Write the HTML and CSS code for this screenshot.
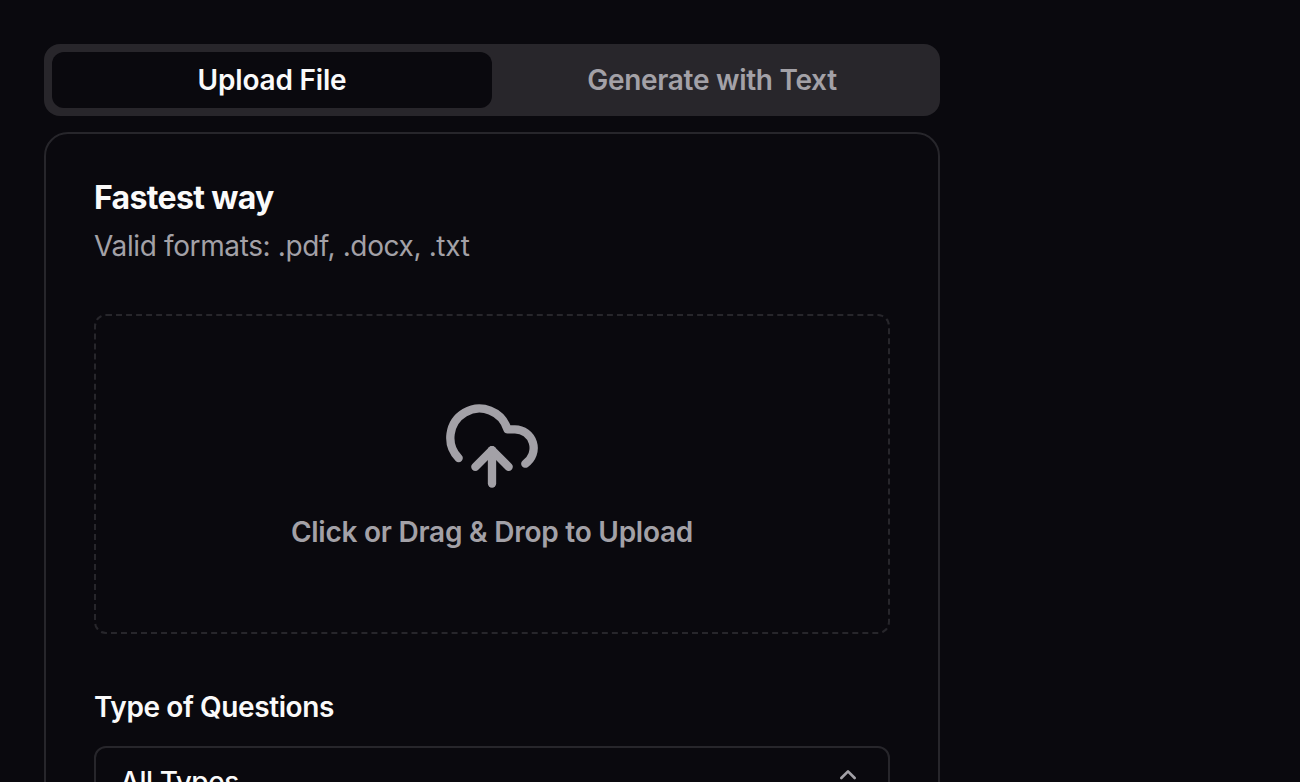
FILE: index.html
```html
<!DOCTYPE html>
<html lang="en">
<head>
    <meta charset="UTF-8">
    <meta name="viewport" content="width=device-width, initial-scale=1.0">
    <title>Upload File</title>
    <link rel="stylesheet" href="styles.css">
</head>
<body>
    <main class="container">
        <div class="tabs">
            <button class="tab active">Upload File</button>
            <button class="tab">Generate with Text</button>
        </div>

        <section class="card">
            <h1 class="title">Fastest way</h1>
            <p class="subtitle">Valid formats: .pdf, .docx, .txt</p>

            <div class="dropzone">
                <svg class="cloud" viewBox="0 0 24 24" fill="none" stroke="currentColor" stroke-width="2" stroke-linecap="round" stroke-linejoin="round">
                    <path d="M4 14.899A7 7 0 1 1 15.71 8h1.79a4.5 4.5 0 0 1 2.5 8.242" />
                    <path d="M12 13v8" />
                    <path d="m8 17 4-4 4 4" />
                </svg>
                <p class="dropzone-label">Click or Drag &amp; Drop to Upload</p>
            </div>

            <h2 class="label">Type of Questions</h2>
            <button class="select">
                <span class="select-value">All Types</span>
                <svg class="chevrons" viewBox="0 0 24 24" fill="none" stroke="currentColor" stroke-width="2" stroke-linecap="round" stroke-linejoin="round">
                    <path d="m7 15 5 5 5-5" />
                    <path d="m7 9 5-5 5 5" />
                </svg>
            </button>
        </section>
    </main>
</body>
</html>
```

FILE: styles.css
```css
* {
    box-sizing: border-box;
}

body {
    margin: 0;
    height: 100vh;
    overflow: hidden;
    background-color: #0a090e;
    color: #fafafa;
    font-family: 'Inter', sans-serif;
    font-size: 28px;
}

h1, h2, p {
    margin: 0;
}

button {
    font: inherit;
    color: inherit;
    border: none;
    background: none;
    padding: 0;
}

.container {
    width: 896px;
    margin: 44px 0 0 44px;
}

.tabs {
    display: flex;
    height: 72px;
    padding: 8px;
    background-color: #28262b;
    border-radius: 16px;
}

.tab {
    flex: 1;
    border-radius: 12px;
    color: #a3a1a7;
    font-weight: 600;
    letter-spacing: -0.3px;
}

.tab.active {
    background-color: #0a090e;
    color: #fafafa;
    letter-spacing: -0.2px;
}

.card {
    height: 800px;
    margin-top: 16px;
    padding: 46px 48px;
    border: 2px solid #27262b;
    border-radius: 24px;
}

.title {
    font-size: 32px;
    font-weight: 700;
    line-height: 36px;
    letter-spacing: -0.65px;
}

.subtitle {
    margin-top: 10px;
    line-height: 40px;
    letter-spacing: -0.37px;
    color: #a3a1a7;
}

.dropzone {
    display: flex;
    flex-direction: column;
    align-items: center;
    height: 320px;
    margin-top: 48px;
    padding-top: 80px;
    border: 2px dashed #27262b;
    border-radius: 12px;
    color: #a3a1a7;
}

.cloud {
    width: 100px;
    height: 100px;
}

.dropzone-label {
    margin-top: 16px;
    font-weight: 600;
    line-height: 40px;
    letter-spacing: -0.24px;
}

.label {
    margin-top: 53px;
    font-size: 28px;
    font-weight: 600;
    line-height: 40px;
    letter-spacing: -0.4px;
}

.select {
    display: flex;
    justify-content: space-between;
    align-items: center;
    width: 100%;
    height: 72px;
    margin-top: 19px;
    padding: 0 24px;
    border: 2px solid #27262b;
    border-radius: 12px;
}

.select-value {
    font-weight: 500;
    letter-spacing: -0.45px;
}

.chevrons {
    width: 32px;
    height: 32px;
    color: #a3a1a7;
}
```
